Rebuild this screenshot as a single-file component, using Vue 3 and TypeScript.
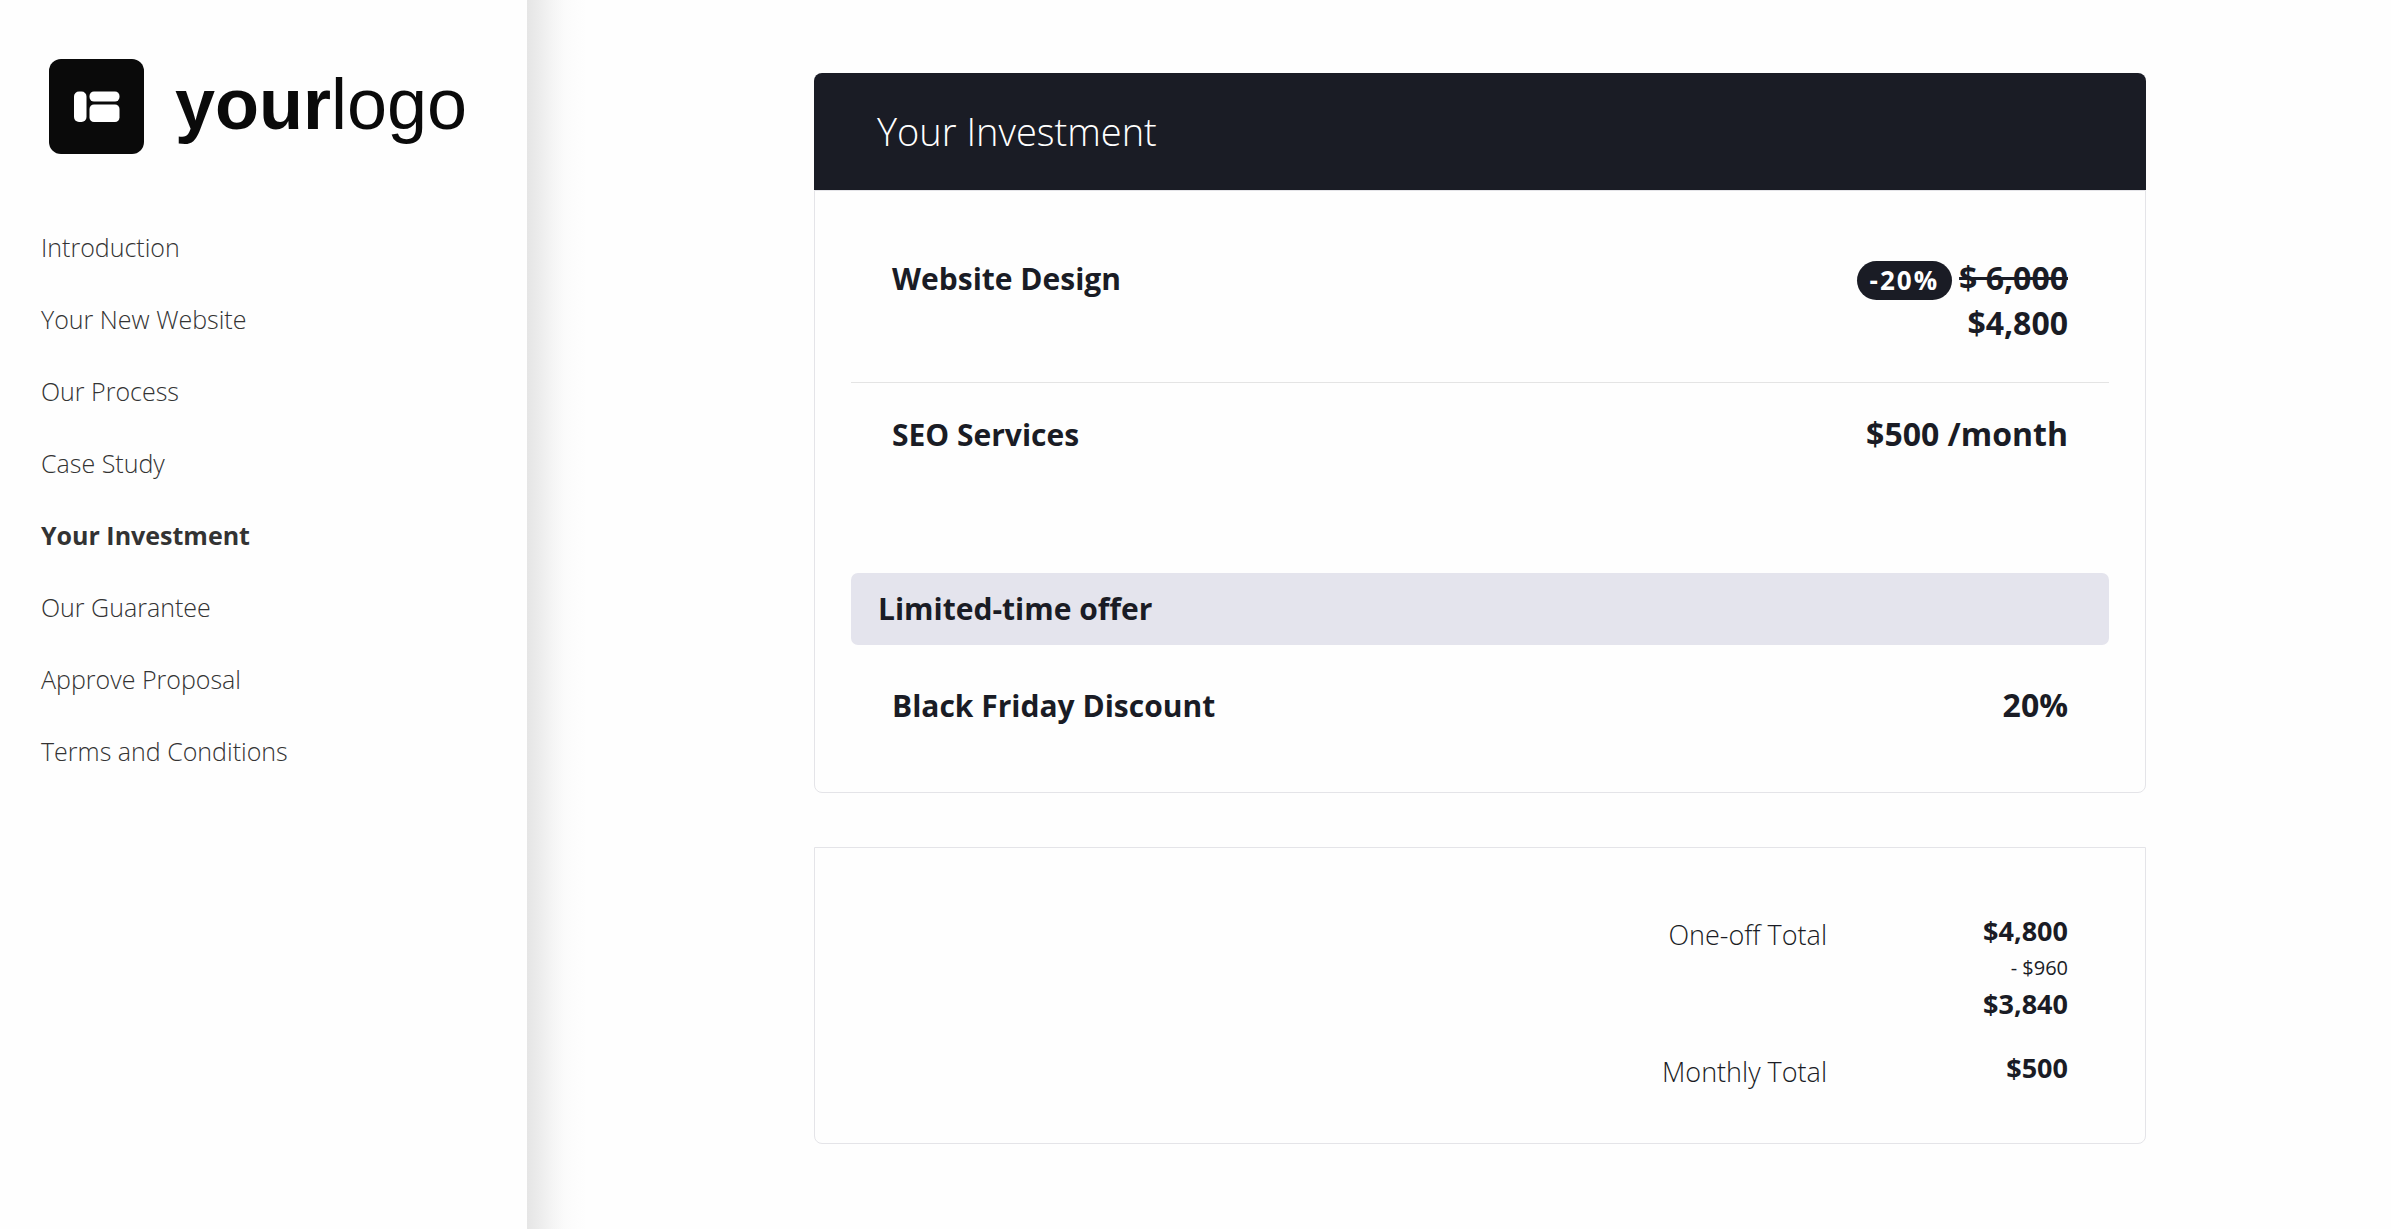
<script setup lang="ts">
import { ref } from 'vue'

interface Section {
  id: string
  title: string
}

interface LineItem {
  name: string
  price: string
  before?: string
  badge?: string
}

interface Total {
  label: string
  amount: string
  discount?: string
  final?: string
}

const sections: Section[] = [
  { id: 'introduction', title: 'Introduction' },
  { id: 'website', title: 'Your New Website' },
  { id: 'process', title: 'Our Process' },
  { id: 'case-study', title: 'Case Study' },
  { id: 'investment', title: 'Your Investment' },
  { id: 'guarantee', title: 'Our Guarantee' },
  { id: 'approve', title: 'Approve Proposal' },
  { id: 'terms', title: 'Terms and Conditions' },
]

const active = ref('investment')

const items: LineItem[] = [
  { name: 'Website Design', price: '$4,800', before: '$ 6,000', badge: '-20%' },
  { name: 'SEO Services', price: '$500 /month' },
]

const offers: LineItem[] = [{ name: 'Black Friday Discount', price: '20%' }]

const totals: Total[] = [
  { label: 'One-off Total', amount: '$4,800', discount: '- $960', final: '$3,840' },
  { label: 'Monthly Total', amount: '$500' },
]
</script>

<template>
  <div class="page">
    <aside class="sidebar">
      <div class="logo">
        <svg class="logo-mark" viewBox="0 0 95 95" aria-hidden="true">
          <rect width="95" height="95" rx="12" fill="#0a0a0a" />
          <rect x="25" y="32.5" width="12.5" height="30.5" rx="5" fill="#fff" />
          <rect x="40.5" y="32.5" width="30" height="10" rx="4.5" fill="#fff" />
          <rect x="40.5" y="45.5" width="30" height="17.5" rx="4.5" fill="#fff" />
        </svg>
        <span class="logo-text"><b>your</b>logo</span>
      </div>
      <nav class="nav" aria-label="Proposal sections">
        <a
          v-for="section in sections"
          :key="section.id"
          :href="'#' + section.id"
          :class="{ active: section.id === active }"
          @click="active = section.id"
        >{{ section.title }}</a>
      </nav>
    </aside>

    <main class="content">
      <section class="card">
        <h1 class="card-header">Your Investment</h1>
        <div class="card-body">
          <div class="items">
            <div v-for="item in items" :key="item.name" class="item">
              <h2 class="name">{{ item.name }}</h2>
              <div class="price">
                <div v-if="item.before" class="before">
                  <span class="badge">{{ item.badge }}</span>
                  <s>{{ item.before }}</s>
                </div>
                <div>{{ item.price }}</div>
              </div>
            </div>
          </div>
          <h2 class="offer-title">Limited-time offer</h2>
          <div v-for="offer in offers" :key="offer.name" class="item">
            <h2 class="name">{{ offer.name }}</h2>
            <div class="price">{{ offer.price }}</div>
          </div>
        </div>
      </section>

      <section class="totals">
        <table>
          <tbody>
            <tr v-for="total in totals" :key="total.label">
              <th scope="row">{{ total.label }}</th>
              <td>
                <div class="amount">{{ total.amount }}</div>
                <div v-if="total.discount" class="discount">{{ total.discount }}</div>
                <div v-if="total.final" class="amount">{{ total.final }}</div>
              </td>
            </tr>
          </tbody>
        </table>
      </section>
    </main>
  </div>
</template>

<style>
body {
  background: #fefefe;
}
</style>

<style scoped>
.page {
  display: flex;
  min-height: 100vh;
  font-family: "Open Sans", "Noto Sans", sans-serif;
  color: #1a1c25;
}

.sidebar {
  box-sizing: border-box;
  flex: 0 0 527px;
  padding: 59px 41px;
}

.logo {
  display: flex;
  align-items: flex-start;
  gap: 31px;
  padding-left: 8px;
}

.logo-mark {
  flex: none;
  width: 95px;
  height: 95px;
}

.logo-text {
  font-family: "Liberation Sans", Arial, sans-serif;
  font-size: 72px;
  line-height: 90px;
  color: #0a0a0a;
}

.nav {
  display: flex;
  flex-direction: column;
  margin-top: 57px;
}

.nav a {
  font-size: 25px;
  line-height: 72px;
  font-weight: 300;
  color: #333;
  text-decoration: none;
}

.nav .active {
  font-weight: 700;
}

/* The sidebar's shadow falls on the left edge of the content. */
.content {
  flex: 1;
  min-width: 0;
  padding: 73px 245px 73px 287px;
  background: linear-gradient(to right, #e5e5e5, #ececec 12px, #f5f5f5 26px, #fbfbfb 38px, #fefefe 60px);
}

.card-header {
  margin: 0;
  padding: 0 63px;
  border-radius: 8px 8px 0 0;
  background: #1a1c25;
  color: #fff;
  font-size: 38px;
  font-weight: 300;
  line-height: 117px;
}

.card-body {
  padding: 36px 36px 28px;
  border: 1px solid #e4e4e8;
  border-radius: 0 0 8px 8px;
}

.item {
  display: flex;
  align-items: baseline;
  justify-content: space-between;
  padding: 28px 41px 37px;
}

.item + .item {
  border-top: 1px solid #e4e4e4;
}

.name {
  margin: 0;
  font-size: 30px;
  font-weight: 700;
  line-height: 42px;
}

.price {
  font-size: 32px;
  font-weight: 700;
  line-height: 45px;
  text-align: right;
}

.before {
  display: flex;
  justify-content: flex-end;
  align-items: baseline;
  gap: 7px;
  height: 45px;
}

.badge {
  padding: 0 13px;
  border-radius: 20px;
  background: #1a1c25;
  color: #fff;
  font-size: 26px;
  line-height: 39px;
  letter-spacing: 2px;
}

.offer-title {
  margin: 80px 0 9px;
  padding: 0 27px;
  border-radius: 7px;
  background: #e4e4ed;
  font-size: 30px;
  font-weight: 700;
  line-height: 72px;
}

.totals {
  margin-top: 54px;
  padding: 65px 77px 29px;
  border: 1px solid #e4e4e8;
  border-radius: 0 0 8px 8px;
}

.totals table {
  margin-left: auto;
  border-collapse: collapse;
}

.totals th {
  padding: 4px 0 0;
  font-size: 27px;
  font-weight: 300;
  line-height: 36px;
  text-align: right;
  vertical-align: top;
}

.totals td {
  width: 241px;
  padding: 0 0 28px;
  text-align: right;
  vertical-align: top;
}

.amount {
  font-size: 27px;
  font-weight: 700;
  line-height: 36px;
}

.discount {
  font-size: 20px;
  line-height: 37px;
}
</style>
